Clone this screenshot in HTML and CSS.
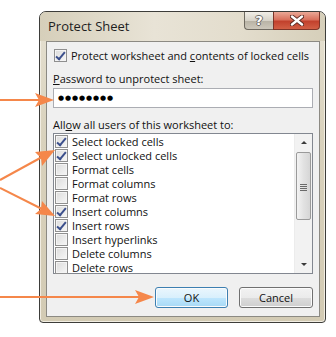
FILE: index.html
```html
<!DOCTYPE html>
<html lang="en">
<head>
  <meta charset="UTF-8" />
  <title>Protect Sheet</title>
  <link rel="stylesheet" href="styles.css">
</head>
<body>
  <div class="scene">
    <div class="dialog">
      <div class="titlebar">
        <span class="title">Protect Sheet</span>
        <div class="caption-btns">
          <span class="cap help">?</span>
          <span class="cap close">
            <svg width="14" height="11" viewBox="0 0 14 11">
              <path d="M2 1.5 L12 9.5 M12 1.5 L2 9.5" stroke="#5a2a22" stroke-width="4.2" stroke-linecap="round"/>
              <path d="M2 1.5 L12 9.5 M12 1.5 L2 9.5" stroke="#fff" stroke-width="2.4" stroke-linecap="round"/>
            </svg>
          </span>
        </div>
      </div>

      <div class="panel">
        <div class="check-row top-check">
          <span class="box checked"></span>
          <span>Protect worksheet and <u>c</u>ontents of locked cells</span>
        </div>
        <div class="field-label"><u>P</u>assword to unprotect sheet:</div>
        <div class="password">&#9679;&#9679;&#9679;&#9679;&#9679;&#9679;&#9679;&#9679;</div>
        <div class="field-label list-label">All<u>o</u>w all users of this worksheet to:</div>

        <div class="listbox">
          <ul class="items">
            <li><span class="box checked"></span>Select locked cells</li>
            <li><span class="box checked"></span>Select unlocked cells</li>
            <li><span class="box"></span>Format cells</li>
            <li><span class="box"></span>Format columns</li>
            <li><span class="box"></span>Format rows</li>
            <li><span class="box checked"></span>Insert columns</li>
            <li><span class="box checked"></span>Insert rows</li>
            <li><span class="box"></span>Insert hyperlinks</li>
            <li><span class="box"></span>Delete columns</li>
            <li><span class="box"></span>Delete rows</li>
          </ul>
          <div class="scrollbar">
            <span class="arrow up"></span>
            <div class="track">
              <div class="thumb"><span class="grip"></span></div>
            </div>
            <span class="arrow down"></span>
          </div>
        </div>

        <div class="buttons">
          <button class="btn ok">OK</button>
          <button class="btn">Cancel</button>
        </div>
      </div>
    </div>

    <!-- callout arrows drawn over the screenshot -->
    <svg class="arrows" width="336" height="337" viewBox="0 0 336 337">
      <g stroke="#f5874a" stroke-width="2" fill="#f5874a">
        <line x1="0" y1="100" x2="40" y2="100"/>
        <polygon points="54,100 35,93 39,100 35,107" stroke="none"/>
        <line x1="0" y1="180" x2="42" y2="157"/>
        <polygon points="55,150 35,152 41,158 42,166" stroke="none"/>
        <line x1="0" y1="188" x2="42" y2="209"/>
        <polygon points="55,216 42,201 41,209 35,214" stroke="none"/>
        <line x1="0" y1="297" x2="140" y2="297"/>
        <polygon points="154,297 135,290 139,297 135,304" stroke="none"/>
      </g>
    </svg>
  </div>
</body>
</html>
```

FILE: styles.css
```css
body {
  margin: 0;
  background: #fff;
  font-family: 'Open Sans', 'Noto Sans', sans-serif;
  font-size: 11px;
  color: #111;
}

.scene {
  position: relative;
  width: 336px;
  height: 337px;
  overflow: hidden;
}

.dialog {
  box-sizing: border-box;
  width: 287px;
  height: 312px;
  margin: 11px 0 0 39px;
  border: 1px solid #3d3d3a;
  border-radius: 7px 7px 4px 4px;
  background: linear-gradient(to bottom, #e6e1d2 0%, #d9d2bd 40%, #d3cbb4 100%);
  box-shadow: inset 0 0 0 1px #f1ede2;
  display: flex;
  flex-direction: column;
}

.titlebar {
  height: 29px;
  display: flex;
  justify-content: space-between;
  align-items: flex-start;
  background: linear-gradient(to right, #d6cfba, #e8e3d6 40%, #e3ddcd 70%, #d6cfba);
  border-radius: 6px 6px 0 0;
}

.title {
  margin: 7px 0 0 8px;
  font-size: 13px;
  line-height: 15px;
  color: #1e1e1e;
}

.caption-btns {
  display: flex;
  margin-right: 5px;
}

.cap {
  box-sizing: border-box;
  height: 18px;
  display: flex;
  align-items: center;
  justify-content: center;
  border: 1px solid #6e6a60;
  border-top: none;
}

.help {
  width: 29px;
  border-radius: 0 0 0 4px;
  border-right: none;
  background: linear-gradient(to bottom, #f1eee7 0%, #d7d3c8 50%, #b9b4a6 55%, #cdc8bb 100%);
  color: #fff;
  font-family: 'DejaVu Sans', sans-serif;
  font-weight: bold;
  font-size: 13px;
  text-shadow: 1px 0 #6c6a66, -1px 0 #6c6a66, 0 1px #6c6a66, 0 -1px #6c6a66;
}

.close {
  width: 47px;
  border-radius: 0 0 4px 0;
  border-color: #7d3428;
  background: linear-gradient(to bottom, #eaa896 0%, #d9715d 45%, #c2412d 55%, #d25f45 100%);
}

.panel {
  box-sizing: border-box;
  width: 274px;
  height: 276px;
  margin: 0 5px 5px 6px;
  border: 1px solid #8c8a83;
  background: #f0f0f0;
  padding: 6px 6px 8px 6px;
  display: flex;
  flex-direction: column;
}

.check-row {
  display: flex;
  align-items: center;
  height: 14px;
  white-space: nowrap;
}

.top-check .box {
  margin-left: 1px;
}

.box {
  box-sizing: border-box;
  flex: none;
  width: 13px;
  height: 13px;
  margin-right: 4px;
  border: 1px solid #8f8f8f;
  background: linear-gradient(to bottom right, #dcdcdc, #f6f6f6);
  box-shadow: inset 0 0 0 1px #f4f4f4;
  position: relative;
}

.box.checked::after {
  content: "";
  position: absolute;
  left: 3px;
  top: 0px;
  width: 3px;
  height: 8px;
  border: solid #3b4f8c;
  border-width: 0 2px 2px 0;
  transform: rotate(40deg);
}

.field-label {
  margin-top: 10px;
  line-height: 14px;
  white-space: nowrap;
}

.password {
  box-sizing: border-box;
  margin-top: 2px;
  width: 260px;
  height: 20px;
  border: 1px solid #abadb3;
  background: #fff;
  padding-left: 4px;
  font-family: 'DejaVu Sans', sans-serif;
  font-size: 7px;
  letter-spacing: 0.9px;
  line-height: 18px;
  color: #000;
}

.list-label {
  margin-top: 10px;
}

.listbox {
  box-sizing: border-box;
  margin-top: 1px;
  width: 260px;
  height: 141px;
  border: 1px solid #828790;
  background: #fff;
  display: flex;
}

.items {
  list-style: none;
  margin: 0;
  padding: 0 0 0 1px;
  flex: 1;
}

.items li {
  display: flex;
  align-items: center;
  height: 14px;
  white-space: nowrap;
}

.scrollbar {
  width: 17px;
  display: flex;
  flex-direction: column;
  background: #f2f2f2;
  border-left: 1px solid #ececec;
}

.arrow {
  height: 17px;
  display: flex;
  align-items: center;
  justify-content: center;
}

.arrow::before {
  content: "";
  border-left: 3px solid transparent;
  border-right: 3px solid transparent;
}

.arrow.up::before {
  border-bottom: 3px solid #3a3a3a;
}

.arrow.down::before {
  border-top: 3px solid #3a3a3a;
}

.track {
  flex: 1;
}

.thumb {
  box-sizing: border-box;
  margin: 1px 0 0 1px;
  width: 15px;
  height: 68px;
  border: 1px solid #9a9a9a;
  border-radius: 2px;
  background: linear-gradient(to right, #f3f3f3, #e2e2e2 50%, #d6d6d6);
  display: flex;
  align-items: center;
  justify-content: center;
}

.grip {
  width: 7px;
  height: 1px;
  background: #6a6a6a;
  box-shadow: 0 2px #6a6a6a, 0 4px #6a6a6a, 0 -2px #6a6a6a;
}

.buttons {
  margin-top: 13px;
  display: flex;
  justify-content: flex-end;
  gap: 11px;
}

.btn {
  box-sizing: border-box;
  width: 74px;
  height: 21px;
  padding: 0;
  border: 1px solid #707070;
  border-radius: 3px;
  font-family: inherit;
  font-size: 11px;
  color: #111;
  background: linear-gradient(to bottom, #f2f2f2 0%, #ebebeb 50%, #dddddd 51%, #cfcfcf 100%);
  box-shadow: inset 0 0 0 1px #fbfbfb;
}

.btn.ok {
  width: 73px;
  border-color: #3c7fb1;
  background: linear-gradient(to bottom, #eaf6fd 0%, #d9f0fc 50%, #bee6fd 51%, #a7d9f5 100%);
}

.arrows {
  position: absolute;
  left: 0;
  top: 0;
}
```
